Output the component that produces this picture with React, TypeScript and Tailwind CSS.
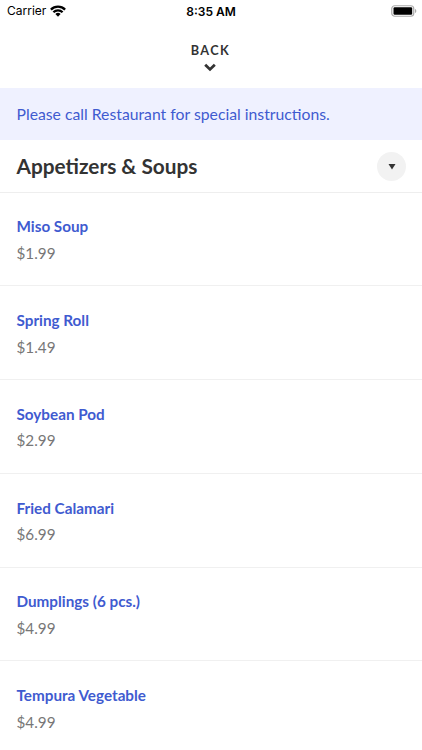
const items = [
  ["Miso Soup", "$1.99"],
  ["Spring Roll", "$1.49"],
  ["Soybean Pod", "$2.99"],
  ["Fried Calamari", "$6.99"],
  ["Dumplings (6 pcs.)", "$4.99"],
  ["Tempura Vegetable", "$4.99"],
];

function StatusBar() {
  return (
    <div className="grid h-[22px] grid-cols-3 items-center font-[Inter,sans-serif] text-black">
      <div className="flex items-center gap-[4px] pl-[7px] text-[12px]">
        <span>Carrier</span>
        <svg className="-mt-px" width="16" height="12" viewBox="0 0 16 12" fill="none" stroke="#000" strokeWidth="2.3">
          <path d="M.9 4.600a10 10 0 0 1 14.200 0M3.400 7.300a6.500 6.500 0 0 1 9.200 0" />
          <path d="M5.400 9.100a3.700 3.700 0 0 1 5.200 0L8 11.700z" fill="#000" stroke="none" />
        </svg>
      </div>
      <div className="pt-px text-center text-[12px] font-semibold">8:35 AM</div>
      <div className="-mt-px flex justify-end pr-[5px]">
        <svg width="26" height="12" viewBox="0 0 26 12">
          <rect x=".75" y=".75" width="22" height="10.500" rx="3" fill="none" stroke="#aaa" strokeWidth="1.200" />
          <rect x="2.500" y="2.300" width="18.700" height="7.500" rx="1.200" />
          <path d="M24 4v4c.8-.3 1.3-1 1.3-2S24.800 4.300 24 4z" fill="#aaa" />
        </svg>
      </div>
    </div>
  );
}

export default function App() {
  return (
    <div className="h-[750px] w-[422px] overflow-hidden bg-white font-[Lato,sans-serif]">
      <StatusBar />
      <div className="flex h-[66px] flex-col items-center pt-[18px]">
        <span className="mr-px text-[12.700px] leading-5 font-bold tracking-[1.400px] text-[#333]">BACK</span>
        <svg className="mt-[3px] mr-[2px]" width="12" height="9" viewBox="0 0 12 9" fill="none" stroke="#333" strokeWidth="2.800">
          <path d="M1.200 1.700l4.800 4.700 4.800-4.700" />
        </svg>
      </div>
      <div className="flex h-[51.500px] items-center bg-[#eff1ff] pl-[16.500px] text-[15.750px] text-[#3f5bd0]">
        <span className="pt-px">Please call Restaurant for special instructions.</span>
      </div>
      <div className="flex h-[53.200px] items-center justify-between border-b border-[#eee] pr-[16px] pl-[16.500px]">
        <h1 className="text-[20.800px] font-bold text-[#333]">Appetizers &amp; Soups</h1>
        <div className="mt-px flex size-[29px] items-center justify-center rounded-full bg-[#f2f2f2]">
          <svg className="mt-px" width="8" height="6" viewBox="0 0 8 6" fill="#333"><path d="M.5 0h7L4 5.500z" /></svg>
        </div>
      </div>
      {items.map(([name, price]) => (
        <div key={name} className="h-[93.750px] border-b border-[#f0f0f0] pt-[20.800px] pl-[16.500px] text-[15.250px] leading-[26.500px]">
          <div className="font-bold text-[#3f5bd0]">{name}</div>
          <div className="text-[#777]">{price}</div>
        </div>
      ))}
    </div>
  );
}
